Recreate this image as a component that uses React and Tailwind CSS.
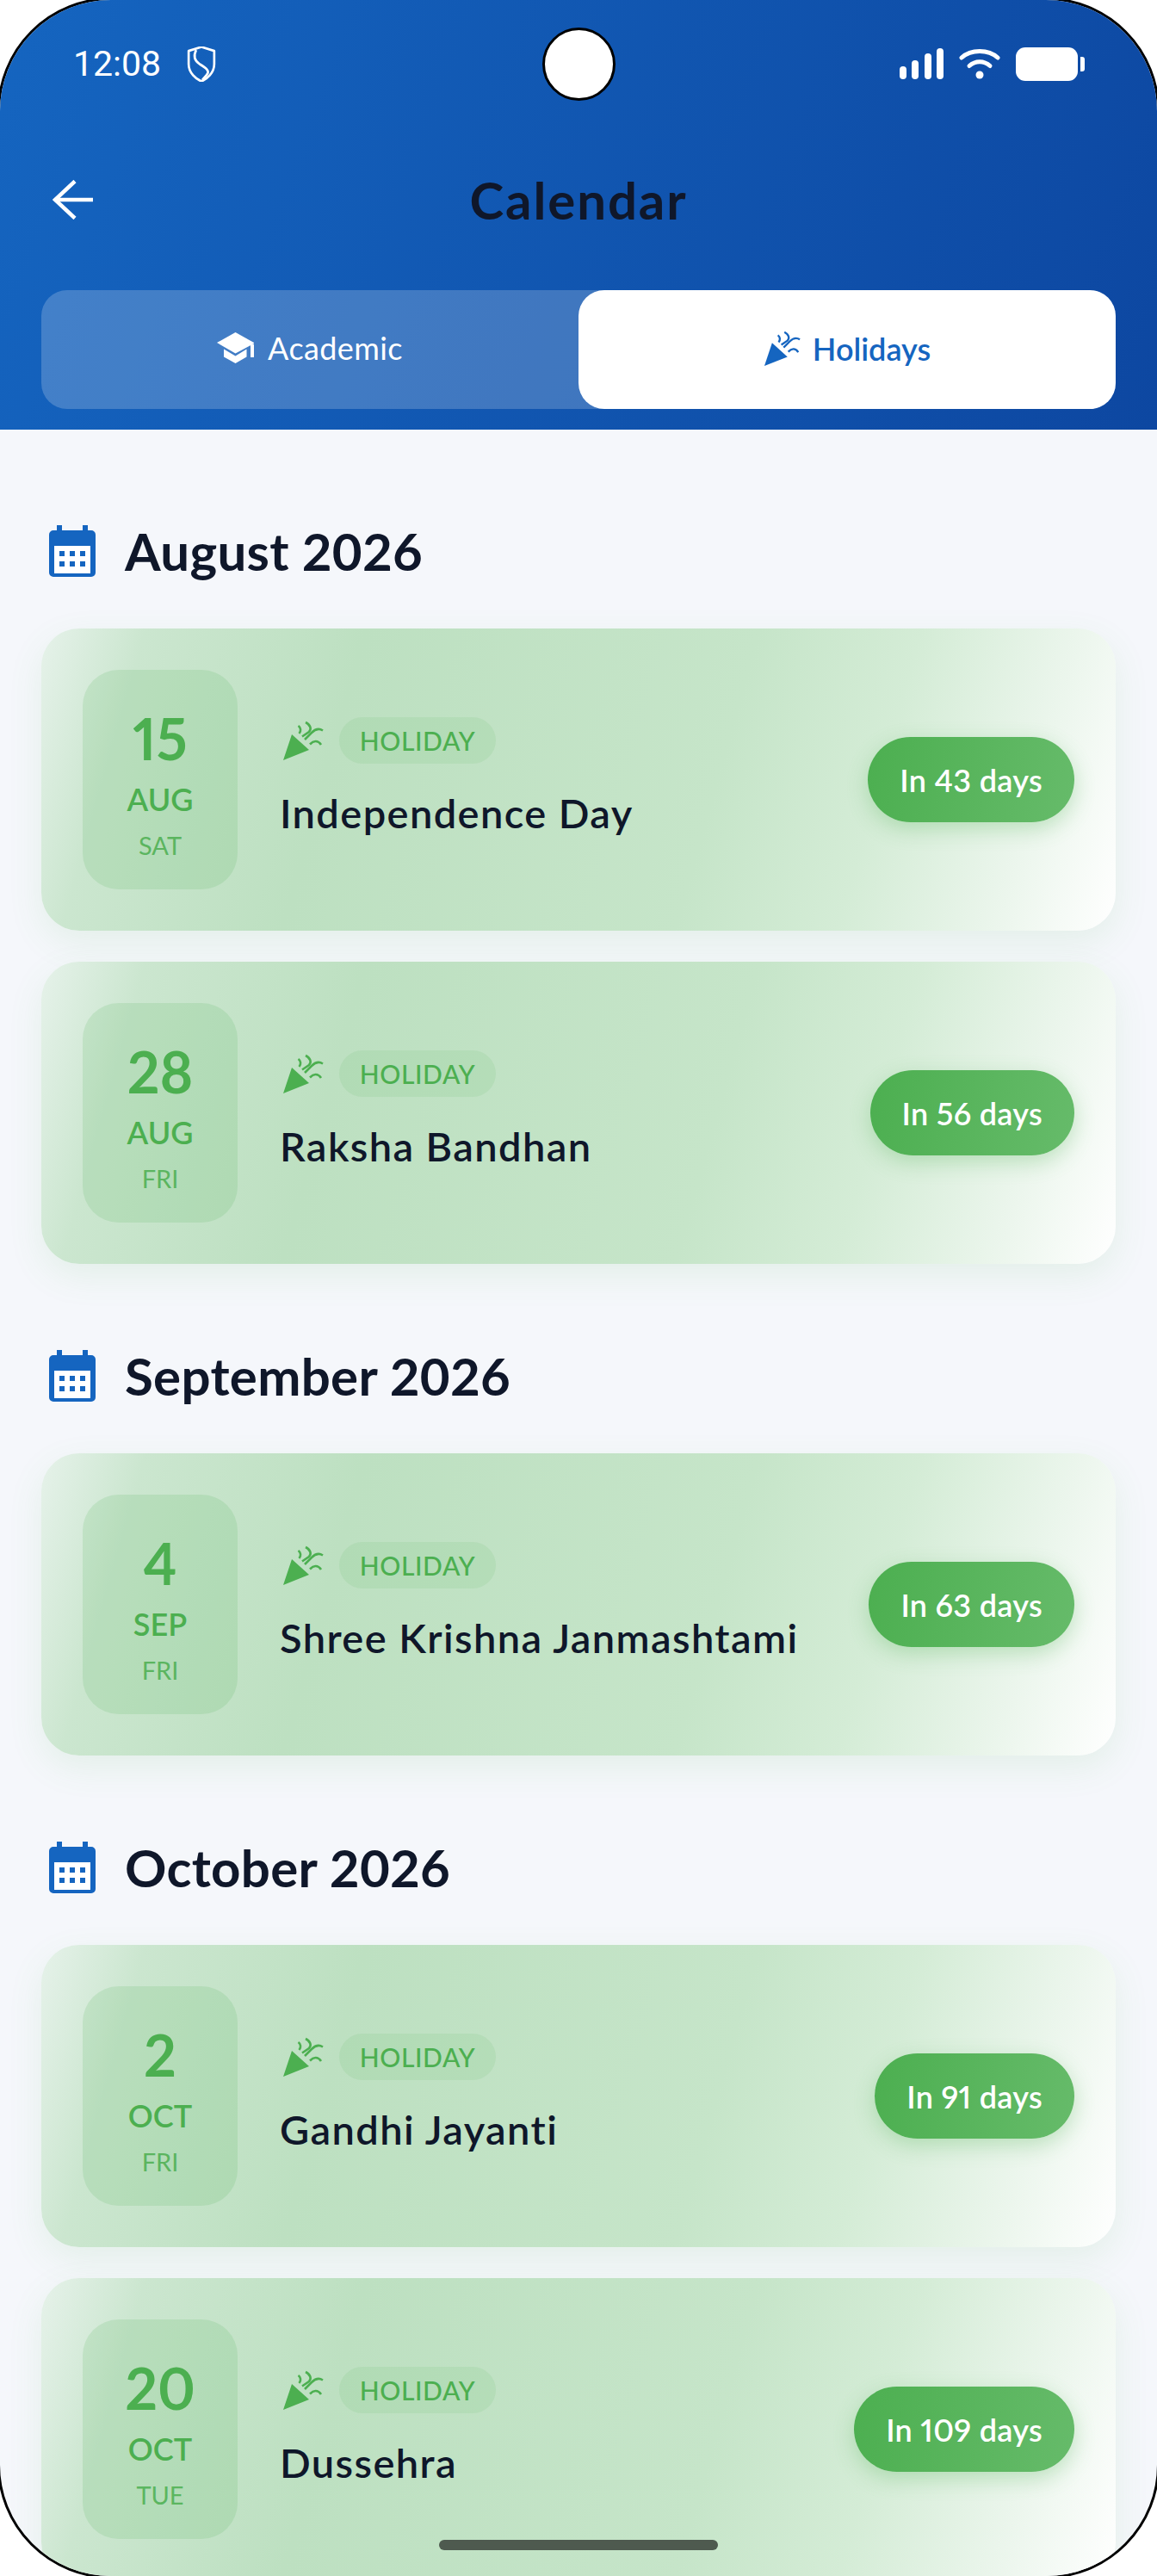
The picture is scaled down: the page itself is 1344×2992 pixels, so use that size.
import { Fragment } from "react";

const months = [
  {
    title: "August 2026",
    events: [
      { day: "15", month: "AUG", weekday: "SAT", name: "Independence Day", left: "In 43 days" },
      { day: "28", month: "AUG", weekday: "FRI", name: "Raksha Bandhan", left: "In 56 days" },
    ],
  },
  {
    title: "September 2026",
    events: [{ day: "4", month: "SEP", weekday: "FRI", name: "Shree Krishna Janmashtami", left: "In 63 days" }],
  },
  {
    title: "October 2026",
    events: [
      { day: "2", month: "OCT", weekday: "FRI", name: "Gandhi Jayanti", left: "In 91 days" },
      { day: "20", month: "OCT", weekday: "TUE", name: "Dussehra", left: "In 109 days" },
    ],
  },
];

function PartyIcon({ className }) {
  return (
    <svg viewBox="18 15 48 47" className={className} fill="none">
      <path d="M19 61 L29 31 L49 49 Z" fill="currentColor" />
      <g stroke="currentColor" strokeWidth="2.6" strokeLinecap="butt">
        <path d="M36.5 21 C39.5 23 40 27 37.5 30" />
        <path d="M45 17 C51 20 52 25 49 28 L41 33.5" />
        <path d="M44 37 L52 29 C56 25 61 24 65 26.5" />
        <path d="M50 42.5 C54 38.5 59 37 63 43" />
      </g>
    </svg>
  );
}

function CapIcon() {
  return (
    <svg viewBox="0 0 43 36" className="h-[36px] w-[43px]" fill="white">
      <path d="M21.5 0 L43 12 V13 L21.5 24.5 L0 12 Z" />
      <path d="M8 19.5 L21.5 27.5 L34.5 19.5 V28.5 L21.5 36 L8 28.5 Z" />
      <rect x="39" y="14" width="4" height="15" />
    </svg>
  );
}

function CalendarIcon() {
  return (
    <svg viewBox="0 0 54 60" className="h-[60px] w-[54px] shrink-0">
      <path
        d="M9 0 H15 V6 H39 V0 H45 V6 H49 A5 5 0 0 1 54 11 V55 A5 5 0 0 1 49 60 H5 A5 5 0 0 1 0 55 V11 A5 5 0 0 1 5 6 H9 Z"
        fill="#1565c0"
      />
      <rect x="6" y="24" width="42" height="32" fill="white" />
      <g fill="#1565c0">
        <rect x="12" y="30" width="6" height="6" />
        <rect x="24" y="30" width="6" height="6" />
        <rect x="36" y="30" width="6" height="6" />
        <rect x="12" y="42" width="6" height="6" />
        <rect x="24" y="42" width="6" height="6" />
        <rect x="36" y="42" width="6" height="6" />
      </g>
    </svg>
  );
}

function StatusBar() {
  return (
    <div className="flex h-[148px] items-center justify-between pl-[85px] pr-[84px]">
      <div className="flex items-center gap-[30px]">
        <span className="font-[Roboto,sans-serif] text-[41px] leading-none text-white">12:08</span>
        <svg viewBox="14 10 32 40" className="h-[41px] w-[34px]" fill="none" stroke="white" strokeWidth="2.6">
          <path d="M30 10.5 L15.5 15 V30 C15.5 40 24 47 30 49.5 C36 47 44.5 40 44.5 30 V15 Z" strokeLinejoin="round" />
          <path d="M24 14 C21 20 22 26 28 30 C35 34 40 38 36 42 L31 48" />
        </svg>
      </div>
      <div className="flex items-center">
        <svg viewBox="0 0 51 36" className="h-[36px] w-[51px]" fill="white">
          <rect x="0" y="21" width="8" height="15" rx="4" />
          <rect x="14" y="14" width="8" height="22" rx="4" />
          <rect x="29" y="6" width="8" height="30" rx="4" />
          <rect x="43" y="0" width="8" height="36" rx="4" />
        </svg>
        <svg viewBox="0 0 48 36" className="ml-[18px] h-[36px] w-[48px]" fill="none" stroke="white" strokeWidth="5" strokeLinecap="round">
          <path d="M3 11 C14 1 34 1 45 11" />
          <path d="M12 20.5 C19 14 29 14 36 20.5" />
          <circle cx="24" cy="31" r="4.5" fill="white" stroke="none" />
        </svg>
        <svg viewBox="0 0 80 39" className="ml-[18px] h-[39px] w-[80px]" fill="white">
          <rect x="0" y="0" width="72" height="39" rx="11" />
          <path d="M75 11 H77 A3 3 0 0 1 80 14 V25 A3 3 0 0 1 77 28 H75 Z" />
        </svg>
      </div>
    </div>
  );
}

function Header() {
  return (
    <header className="h-[499px] bg-[linear-gradient(110deg,#1565c0,#0d47a1)]">
      <StatusBar />
      <div className="flex h-[168px] items-center justify-between px-[61px]">
        <svg viewBox="0 0 47 46" className="h-[46px] w-[47px]" fill="none" stroke="white" strokeWidth="4.5">
          <path d="M26 1.5 L3 23 L26 44.5" />
          <path d="M3 23 H47" />
        </svg>
        <h1 className="font-[Lato,sans-serif] text-[60px] font-bold leading-none tracking-[1.9px] text-[#0f172a]">Calendar</h1>
        <div className="w-[47px]" />
      </div>
      <div className="mx-[48px] mt-[21px] flex h-[138px] rounded-[30px] bg-white/20">
        <div className="flex flex-1 items-center justify-center gap-[16px] pb-[4px] text-white">
          <CapIcon />
          <span className="font-[Lato,sans-serif] text-[36px] leading-none tracking-[0.4px]">Academic</span>
        </div>
        <div className="flex flex-1 items-center justify-center gap-[14px] rounded-[30px] bg-white pb-[3px] text-[#1565c0]">
          <PartyIcon className="h-[42px] w-[43px]" />
          <span className="font-[Lato,sans-serif] text-[36px] font-semibold leading-none">Holidays</span>
        </div>
      </div>
    </header>
  );
}

function EventCard({ event }) {
  return (
    <div className="flex h-[351px] items-center rounded-[44px] bg-[linear-gradient(105.7deg,#e6f2ea_0%,#cbe6cf_9%,#bde0c1_28%,#c6e5c9_62%,#d4ecd6_76%,#ecf6ed_90%,#ffffff_100%)] px-[48px] shadow-[0_14px_40px_rgba(76,175,80,0.1)]">
      <div className="flex h-[255px] w-[180px] shrink-0 flex-col items-center rounded-[42px] bg-[#4caf50]/15 pt-[46px] font-[Lato,sans-serif] text-[#4caf50] proportional-nums">
        <span className="text-[66px] font-bold leading-[68px]">{event.day}</span>
        <span className="mt-[16px] text-[36px] font-semibold leading-[40px]">{event.month}</span>
        <span className="mt-[16px] text-[29px] leading-[36px] opacity-85">{event.weekday}</span>
      </div>
      <div className="ml-[49px] flex min-w-0 flex-1 flex-col pb-[4px] font-[Lato,sans-serif]">
        <div className="flex items-center">
          <PartyIcon className="ml-[3px] h-[47px] w-[48px] text-[#4caf50]" />
          <span className="ml-[18px] flex h-[54px] w-[182px] items-center justify-center rounded-full bg-[#4caf50]/10 text-[30px] font-medium tracking-[0.6px] text-[#4caf50]">
            HOLIDAY
          </span>
        </div>
        <div className="mt-[27px] text-[47px] font-semibold leading-[60px] tracking-[1.4px] text-[#0f172a]">{event.name}</div>
      </div>
      <div className="flex h-[99px] shrink-0 items-center rounded-full bg-[linear-gradient(100deg,#4caf50,#66bb6a)] px-[37px] font-[Lato,sans-serif] text-[36px] font-semibold tracking-[0.3px] text-white shadow-[0_8px_24px_rgba(76,175,80,0.3)] proportional-nums">
        {event.left}
      </div>
    </div>
  );
}

export default function App() {
  return (
    <div className="h-[2992px] w-[1344px] overflow-hidden bg-white">
      <div className="relative -m-[3px] box-border h-[2998px] w-[1350px] overflow-hidden rounded-[132px] border-[3px] border-black bg-[#f5f7fb]">
        <Header />
        <main className="px-[48px] pt-[103px]">
          {months.map((m, i) => (
            <Fragment key={m.title}>
              <div className={`flex h-[76px] items-center gap-[34px] pl-[9px] ${i > 0 ? "mt-[92px]" : ""}`}>
                <CalendarIcon />
                <h2 className="font-[Lato,sans-serif] text-[60px] font-bold leading-none tracking-[0.3px] text-[#0f172a]">{m.title}</h2>
              </div>
              <div className="mt-[52px] flex flex-col gap-[36px]">
                {m.events.map((event) => (
                  <EventCard key={event.name} event={event} />
                ))}
              </div>
            </Fragment>
          ))}
        </main>
        {/* punch hole camera */}
        <div className="absolute left-[630px] top-[32px] h-[85px] w-[85px] rounded-full border-[3px] border-black bg-white" />
        {/* gesture bar */}
        <div className="absolute bottom-[30px] left-[510px] h-[12px] w-[324px] rounded-full bg-[#4e5a4f]" />
      </div>
    </div>
  );
}
